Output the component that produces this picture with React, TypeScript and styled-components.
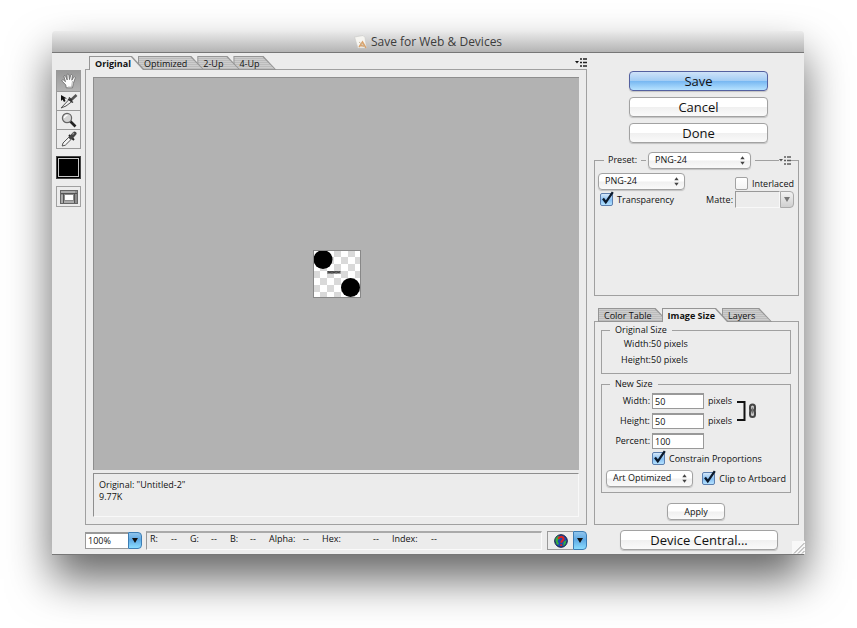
import React, { ReactNode, useState } from "react";
import styled, { createGlobalStyle } from "styled-components";

const GlobalStyle = createGlobalStyle`
  * { box-sizing: border-box; }
  body { margin: 0; background: #fff; }
  body, button, input, select {
    font-family: "Open Sans", "Noto Sans", sans-serif;
    font-size: 9px;
    line-height: 12px;
    color: #111;
  }
`;

const line = "#a0a0a0";

const Desktop = styled.div`
  display: flex;
  min-height: 100vh;
  padding: 31px 53px 73px 52px;
`;

const Window = styled.main`
  flex: 1;
  display: flex;
  flex-direction: column;
  min-width: 640px;
  background: #ececec;
  border-bottom: 1px solid #777;
  border-radius: 4px 4px 0 0;
  box-shadow: 0 24px 44px rgba(0, 0, 0, 0.6);
`;

const TitleBar = styled.header`
  display: flex;
  align-items: center;
  justify-content: center;
  gap: 4px;
  height: 22px;
  border-bottom: 1px solid #777;
  border-radius: 4px 4px 0 0;
  background: linear-gradient(#ebebeb, #b4b4b4);
`;

const Title = styled.h1`
  margin: 0;
  font-size: 12px;
  line-height: 20px;
  font-weight: 500;
  color: #3c3c3c;
`;

const Body = styled.div`
  flex: 1;
  display: grid;
  grid-template-columns: 25px minmax(0, 1fr) 211px;
  padding: 3px 6px 4px 4px;
`;

/* tools */

const Tools = styled.nav`
  display: flex;
  flex-direction: column;
  gap: 7px;
  padding-top: 14px;
`;

const ToolGroup = styled.div`
  display: flex;
  flex-direction: column;
  border: 1px solid #999;
`;

const ToolButton = styled.button<{ $active?: boolean }>`
  display: flex;
  align-items: center;
  justify-content: center;
  height: 20px;
  padding: 0;
  border: 0;
  background: ${(p) => (p.$active ? "linear-gradient(#989898, #b4b4b4)" : "#ececec")};
  & + & {
    height: 19px;
    border-top: 1px solid #999;
  }
`;

const Swatch = styled.button`
  height: 23px;
  padding: 0;
  border: 1px solid #444;
  outline: 1px solid #c8c8c8;
  outline-offset: -3px;
  background: #000;
`;

const PreviewToggle = styled.button`
  display: flex;
  align-items: center;
  justify-content: center;
  height: 21px;
  padding: 0;
  border: 1px solid #a0a0a0;
  background: #ececec;
`;

/* tabs */

const TabBar = styled.div`
  display: flex;
  align-items: flex-end;
  height: 13px;
  padding: 0 4px;
`;

const Tab = styled.button<{ $active: boolean; $order: number }>`
  position: relative;
  z-index: ${(p) => (p.$active ? 10 : p.$order)};
  height: 14px;
  margin: 0 -7px -1px 0;
  padding: 0 ${(p) => (p.$active ? "14px" : "17px")} 0 6px;
  border: 0;
  background: none;
  line-height: 13px;
  white-space: nowrap;
  font-weight: ${(p) => (p.$active ? 700 : 400)};
  &::before,
  &::after {
    content: "";
    position: absolute;
    z-index: -1;
  }
  &::before {
    inset: 0;
    background: #959595;
    clip-path: polygon(0 0, calc(100% - 13px) 0, 100% 100%, 0 100%);
  }
  &::after {
    inset: 1px 2px ${(p) => (p.$active ? "0" : "1px")} 1px;
    background: ${(p) =>
      p.$active ? "#ececec" : "repeating-linear-gradient(#cdcdcd 0 1px, #bcbcbc 1px 2px)"};
    clip-path: polygon(0 0, calc(100% - 12px) 0, 100% 100%, 0 100%);
  }
`;

const TabMenu = styled.button`
  display: flex;
  margin-left: auto;
  padding: 0 0 2px;
  border: 0;
  background: none;
`;

/* preview column */

const Preview = styled.section`
  display: flex;
  flex-direction: column;
  min-width: 0;
  margin-left: 4px;
`;

const PreviewTabs = styled(TabBar)`
  padding: 0 0 0 4px;
`;

const PreviewFrame = styled.div`
  flex: 1;
  display: flex;
  flex-direction: column;
  gap: 3px;
  padding: 7px;
  border: 1px solid ${line};
`;

const Canvas = styled.div`
  flex: 1;
  display: flex;
  align-items: center;
  justify-content: center;
  border: 1px solid #8e8e8e;
  border-width: 1px 0 0 1px;
  background: #b2b2b2;
`;

const Info = styled.div`
  height: 44px;
  padding: 5px;
  border: 1px solid;
  border-color: #8e8e8e #f8f8f8 #f8f8f8 #8e8e8e;
  p { margin: 0; }
`;

const Footer = styled.footer`
  display: flex;
  align-items: flex-end;
  height: 25px;
  gap: 4px;
`;

const Combo = styled.div<{ $wide?: boolean }>`
  display: flex;
  height: 17px;
  width: ${(p) => (p.$wide ? "59px" : "57px")};
`;

const ZoomCombo = styled(Combo)`
  height: 18px;
  padding-bottom: 1px;
`;

const ComboInput = styled.input`
  flex: 1;
  min-width: 0;
  padding: 0 2px;
  border: 1px solid #999;
  border-top-width: 2px;
  border-right: 0;
  background: #fff;
`;

const ComboArrow = styled.button<{ $muted?: boolean }>`
  display: flex;
  align-items: center;
  justify-content: center;
  width: 14px;
  padding: 0;
  border: 1px solid ${(p) => (p.$muted ? "#aaa" : "#3c7db4")};
  border-radius: 0 4px 4px 0;
  background: ${(p) =>
    p.$muted
      ? "linear-gradient(#f2f2f2, #cfcfcf)"
      : "linear-gradient(#8fc4ec, #5fa9e4 45%, #8adcff)"};
`;

const MatteWell = styled.span`
  flex: 1;
  border: 1px solid;
  border-color: #999 #f8f8f8 #f8f8f8 #999;
`;

const Readout = styled.dl`
  flex: 1;
  display: flex;
  height: 19px;
  margin: 0 1px 0 0;
  padding: 0 3px;
  border: 1px solid;
  border-color: #aaa #fafafa #fafafa #999;
  border-top-width: 2px;
`;

const ReadoutItem = styled.div<{ $label: number }>`
  display: grid;
  grid-template-columns: ${(p) => p.$label}px 19px;
  white-space: nowrap;
  dt, dd { margin: 0; line-height: 12px; }
`;

const BrowserPick = styled.div`
  display: flex;
  width: 40px;
  height: 19px;
`;

const BrowserButton = styled.button`
  flex: 1;
  display: flex;
  align-items: center;
  justify-content: center;
  padding: 0;
  border: 1px solid #999;
  border-right: 0;
  background: #ececec;
`;

/* settings column */

const Settings = styled.aside`
  display: flex;
  flex-direction: column;
  margin-left: 7px;
  margin-right: -1px;
`;

const Actions = styled.div`
  display: flex;
  flex-direction: column;
  gap: 6px;
  padding: 15px 31px 8px 35px;
`;

const PushButton = styled.button<{ $primary?: boolean }>`
  height: 20px;
  padding: 0;
  border: 1px solid ${(p) => (p.$primary ? "#5461a0" : "#a2a2a2")};
  border-radius: 4px;
  background: ${(p) =>
    p.$primary
      ? "linear-gradient(#cfe3f8, #a3cdf5 48%, #78b8f2 52%, #b6e2ff)"
      : "linear-gradient(#fff, #fff 48%, #f0f0f0 52%, #fafafa)"};
  box-shadow: 0 1px 1px rgba(0, 0, 0, 0.18);
  font-size: 13px;
  line-height: 17px;
`;

const SmallPush = styled(PushButton)`
  align-self: center;
  width: 58px;
  height: 17px;
  margin-top: 6px;
  font-size: 9px;
  line-height: 14px;
`;

const PresetGroup = styled.fieldset`
  height: 145px;
  min-width: 0;
  margin: 0;
  padding: 3px 4px 3px 3px;
  border: 1px solid ${line};
`;

const PresetLegend = styled.legend`
  display: flex;
  align-items: center;
  width: calc(100% + 7px);
  height: 18px;
  margin: 0 -4px 0 -3px;
  padding: 0;
`;

const Rule = styled.span<{ $width?: number }>`
  flex: ${(p) => (p.$width ? "none" : "1")};
  width: ${(p) => p.$width ?? 0}px;
  height: 1px;
  background: ${line};
  &:last-of-type { margin: 0; }
`;

const PresetLabel = styled.label`
  padding: 0 4px;
`;

const PresetSelect = styled.span`
  padding: 0 4px 0 2px;
`;

const LegendMenu = styled(TabMenu)`
  margin: 0;
  padding: 0;
  opacity: 0.7;
`;

const Row = styled.div`
  display: flex;
  align-items: center;
  justify-content: space-between;
  height: 17px;
`;

const FormatRow = styled(Row)`
  align-items: flex-end;
  height: 18px;
`;

const TransparencyRow = styled(Row)`
  height: 19px;
  padding-left: 2px;
`;

const SelectWrap = styled.span<{ $width: number }>`
  position: relative;
  display: flex;
  width: ${(p) => p.$width}px;
  height: 17px;
  svg {
    position: absolute;
    right: 6px;
    top: 4px;
    pointer-events: none;
  }
`;

const NativeSelect = styled.select`
  appearance: none;
  flex: 1;
  min-width: 0;
  padding: 0 18px 1px 6px;
  border: 1px solid #a2a2a2;
  border-radius: 4px;
  background: linear-gradient(#fff, #fff 48%, #f0f0f0 52%, #fafafa);
  box-shadow: 0 1px 1px rgba(0, 0, 0, 0.18);
`;

const CheckLabel = styled.label`
  display: flex;
  align-items: center;
  gap: 4px;
  white-space: nowrap;
`;

const CheckCell = styled.span`
  display: grid;
  width: 13px;
  height: 13px;
  & > * { grid-area: 1 / 1; }
  svg { overflow: visible; pointer-events: none; }
`;

const CheckInput = styled.input`
  appearance: none;
  width: 13px;
  height: 13px;
  margin: 0;
  border: 1px solid #a2a2a2;
  border-radius: 2px;
  background: linear-gradient(#fff, #f4f4f4);
  &:checked {
    border-color: #5d7fae;
    background: linear-gradient(#d5e8fa, #86bff3 55%, #b4e2ff);
  }
`;

const MatteField = styled.div`
  display: flex;
  align-items: center;
  gap: 2px;
`;

const SizeTabs = styled(TabBar)`
  margin-top: 12px;
`;

const SizePanel = styled.div`
  flex: 1;
  display: flex;
  flex-direction: column;
  gap: 4px;
  padding: 2px 7px 4px 6px;
  border: 1px solid ${line};
`;

const Group = styled.fieldset`
  min-width: 0;
  margin: 0;
  padding: 0 4px;
  border: 1px solid ${line};
  legend {
    margin-left: 4px;
    padding: 0 5px;
    line-height: 12px;
  }
`;

const OriginalSize = styled.dl`
  display: grid;
  grid-template-columns: 45px 1fr;
  align-content: start;
  row-gap: 4px;
  height: 37px;
  margin: 0;
  padding-top: 2px;
  dt { text-align: right; }
  dt, dd { margin: 0; line-height: 12px; }
`;

const SizeFields = styled.div`
  display: flex;
  align-items: flex-start;
  gap: 4px;
  padding-top: 3px;
  & > svg { margin-top: 7px; }
`;

const FieldGrid = styled.div`
  display: grid;
  grid-template-columns: 44px 52px auto;
  grid-auto-rows: 16px;
  align-items: center;
  column-gap: 2px;
  row-gap: 4px;
  label { text-align: right; }
`;

const NumberInput = styled.input`
  width: 100%;
  height: 16px;
  padding: 0 2px;
  border: 1px solid #999;
  border-top-width: 2px;
  background: #fff;
`;

const Unit = styled.span`
  padding-left: 2px;
`;

const ConstrainRow = styled(Row)`
  justify-content: flex-start;
  padding-left: 46px;
  height: 19px;
`;

const ClipRow = styled(Row)`
  height: 21px;
  margin-bottom: 3px;
`;

const BottomRow = styled.div`
  display: flex;
  align-items: flex-end;
  height: 25px;
  padding: 0 21px 0 26px;
  position: relative;
  & > button { flex: 1; }
  & > svg {
    position: absolute;
    right: -6px;
    bottom: -4px;
  }
`;

/* icons */

const MenuIcon = () => (
  <svg width="12" height="9" viewBox="0 0 12 9" aria-hidden="true">
    <path d="M0 3h4L2 5.500z" fill="#111" />
    <path d="M5 1h2M5 4.500h2M5 8h2M8 1h4M8 4.500h4M8 8h4" stroke="#222" strokeWidth="1.300" />
  </svg>
);

const UpDown = () => (
  <svg width="5" height="9" viewBox="0 0 5 9" aria-hidden="true">
    <path d="M.3 3.300L2.500 .3 4.700 3.300zM.3 5.700L2.500 8.700 4.700 5.700z" fill="#444" />
  </svg>
);

const Down = ({ color = "#111" }: { color?: string }) => (
  <svg width="6" height="5" viewBox="0 0 6 5" aria-hidden="true">
    <path d="M0 0h6L3 5z" fill={color} />
  </svg>
);

const Tick = () => (
  <svg width="13" height="13" viewBox="0 0 13 13" aria-hidden="true">
    <path d="M3 5.500L5.800 9.300L12.800 -0.800" fill="none" stroke="#0c1a2c" strokeWidth="2.300" />
  </svg>
);

const DocIcon = () => (
  <svg width="13" height="14" viewBox="0 0 13 14" aria-hidden="true">
    <path d="M.5 2L9 .5l2 2L12.500 13 4 13z" fill="#f6f5f1" stroke="#c9c9c7" strokeWidth=".6" />
    <path d="M5 12l3.500-5 3.500 6M6 10.500l5 .8" fill="none" stroke="#d9a26c" strokeWidth="1.500" />
    <path d="M5 7l6 5" stroke="#c9b79a" strokeWidth="1" />
  </svg>
);

const HandIcon = () => (
  <svg width="16" height="16" viewBox="0 0 16 16" aria-hidden="true">
    <path
      d="M5.200 14.800L4.800 12 1.200 8.200C.4 7.100 1.700 6.300 2.600 7.100L4.500 8.700 3 3.800C2.700 2.500 4.100 2.200 4.600 3.300L6.200 7 6 2C6 .7 7.700.7 7.900 2L8.500 6.600 9.700 2.200C10.100 1 11.600 1.400 11.400 2.700L10.800 7.200 12.700 4.300C13.400 3.300 14.700 4 14.200 5.200L12.300 10.500 11.500 14.800z"
      fill="#fff"
      stroke="#666"
      strokeWidth=".8"
    />
    <path d="M11.500 8l-1 6H7" fill="none" stroke="#bbb" />
  </svg>
);

const SliceIcon = () => (
  <svg width="18" height="15" viewBox="0 0 18 15" aria-hidden="true">
    <path d="M1 14L9 5.500 12 7.500 6 12z" fill="#eee" stroke="#555" strokeWidth="1" />
    <path d="M10 7L16.500 1" stroke="#555" strokeWidth="2.600" />
    <path d="M8 5l5 3.500M9 3.500l3 3" stroke="#333" strokeWidth="1.400" />
    <path d="M1 1v6l1.500-1.500 1.500 2.500 1.500-1L4.500 4.500h2.500z" fill="#111" />
  </svg>
);

const ZoomIcon = () => (
  <svg width="16" height="16" viewBox="0 0 16 16" aria-hidden="true">
    <path d="M9 9l5.500 5.500" stroke="#222" strokeWidth="2.600" />
    <circle cx="6" cy="6" r="4.600" fill="#d4d4d4" stroke="#666" strokeWidth="1.200" />
    <path d="M3.500 6a2.700 2.700 0 0 1 3-2.600" fill="none" stroke="#fff" strokeWidth="1.300" />
  </svg>
);

const DropperIcon = () => (
  <svg width="16" height="16" viewBox="0 0 16 16" aria-hidden="true">
    <path d="M1.200 15l.8-3 6.300-6.200 2.200 2.200-6.200 6.200z" fill="#f5f5f5" stroke="#555" />
    <path d="M8 4l5 5" stroke="#222" strokeWidth="2" />
    <path d="M10 6.500l3.500-4" stroke="#444" strokeWidth="4" strokeLinecap="round" />
    <path d="M11.500 3.500L13 2" stroke="#999" strokeWidth="1.200" />
  </svg>
);

const SlicesIcon = () => (
  <svg width="18" height="14" viewBox="0 0 18 14" aria-hidden="true">
    <rect x=".5" y=".5" width="17" height="13" fill="#8c8c8c" stroke="#666" />
    <path d="M1 1h14v2H1zM1 5h2v8H1z" fill="#aaa" />
    <path d="M1 3.500h16M3.500 4v9M14.500 4v9" stroke="#555" />
    <rect x="5" y="5" width="8" height="5" fill="#fff" />
    <path d="M4 11h10v2H4z" fill="#aaa" />
  </svg>
);

const GlobeIcon = () => (
  <svg width="14" height="14" viewBox="0 0 14 14" aria-hidden="true">
    <circle cx="7" cy="7" r="6.300" fill="#1d47b0" stroke="#101c38" />
    <path d="M1.500 4.500L4 1.800l2 1.700L3.500 7l1.500 3-2 1-1.500-4zM9.500 8l3-2-1 4-2 2.500z" fill="#37b03a" />
    <path
      d="M4.600 5C4.600 2.200 9.600 2.200 9.600 4.800 9.600 6.600 7.200 6.600 7.200 8.800M7.200 10.300v1.800"
      fill="none"
      stroke="#e2231c"
      strokeWidth="2"
    />
  </svg>
);

const LinkIcon = () => (
  <svg width="22" height="22" viewBox="0 0 22 22" aria-hidden="true">
    <path d="M1 2h7.500v18H1" fill="none" stroke="#111" strokeWidth="2" />
    <rect x="14" y="4.500" width="5" height="7" rx="2.500" fill="#ccc" stroke="#444" strokeWidth="2" />
    <rect x="14" y="10" width="5" height="7" rx="2.500" fill="#ccc" stroke="#444" strokeWidth="2" />
    <path d="M16.500 7.500v6" stroke="#777" strokeWidth="1.800" />
  </svg>
);

const Grip = () => (
  <svg width="13" height="13" viewBox="0 0 13 13" aria-hidden="true">
    <rect width="13" height="13" fill="#f8f8f8" />
    <path d="M2 12.500L12.500 2M6 12.500L12.500 6M10 12.500L12.500 10" stroke="#999" />
  </svg>
);

const CELL = 7;
const checker = Array.from({ length: 49 }, (_, i) => [i % 7, Math.floor(i / 7)]).filter(
  ([c, r]) => (c + r) % 2 === 1
);

const Artwork = () => (
  <svg width="48" height="48" viewBox="0 0 48 48" role="img" aria-label="Artwork preview">
    <rect width="48" height="48" fill="#fff" />
    {checker.map(([c, r]) => (
      <rect key={`${c}-${r}`} x={c * CELL} y={r * CELL} width={CELL} height={CELL} fill="#d9d9d9" />
    ))}
    <circle cx="10" cy="9.500" r="9.500" />
    <circle cx="37.500" cy="37.500" r="9.500" />
    <path
      d="M14.500 21l1.300 2.500 1.300-2.500 1.300 2.500 1.300-2.500 1.300 2.500 1.300-2.500 1.300 2.500 1.300-2.500 1.300 2.500 1.300-2.500M14.500 23.500l1.300-2.500 1.300 2.500 1.300-2.500 1.300 2.500 1.300-2.500 1.300 2.500 1.300-2.500 1.300 2.500 1.300-2.500 1.300 2.500"
      fill="none"
      stroke="#333"
      strokeWidth=".8"
    />
    <rect x=".5" y=".5" width="47" height="47" fill="none" stroke="#888" />
  </svg>
);

/* composed controls */

function Select({ id, label, width, value }: { id?: string; label?: string; width: number; value: string }) {
  return (
    <SelectWrap $width={width}>
      <NativeSelect id={id} aria-label={label} defaultValue={value}>
        <option>{value}</option>
      </NativeSelect>
      <UpDown />
    </SelectWrap>
  );
}

function Checkbox({ checked = false, children }: { checked?: boolean; children: ReactNode }) {
  const [on, setOn] = useState(checked);
  return (
    <CheckLabel>
      <CheckCell>
        <CheckInput type="checkbox" checked={on} onChange={(e) => setOn(e.target.checked)} />
        {on && <Tick />}
      </CheckCell>
      {children}
    </CheckLabel>
  );
}

function Tabs({ names, initial }: { names: string[]; initial: string }) {
  const [current, setCurrent] = useState(initial);
  return (
    <>
      {names.map((name, i) => (
        <Tab
          key={name}
          role="tab"
          aria-selected={name === current}
          $active={name === current}
          $order={names.length - i}
          onClick={() => setCurrent(name)}
        >
          {name}
        </Tab>
      ))}
    </>
  );
}

const readings: [string, number][] = [
  ["R:", 21],
  ["G:", 21],
  ["B:", 20],
  ["Alpha:", 34],
  ["Hex:", 51],
  ["Index:", 39],
];

const fields: [string, string, string, string][] = [
  ["width", "Width:", "50", "pixels"],
  ["height", "Height:", "50", "pixels"],
  ["percent", "Percent:", "100", ""],
];

export default function App() {
  return (
    <Desktop>
      <GlobalStyle />
      <Window>
        <TitleBar>
          <DocIcon />
          <Title>Save for Web &amp; Devices</Title>
        </TitleBar>
        <Body>
          <Tools aria-label="Tools">
            <ToolGroup>
              <ToolButton $active aria-label="Hand"><HandIcon /></ToolButton>
              <ToolButton aria-label="Slice select"><SliceIcon /></ToolButton>
              <ToolButton aria-label="Zoom"><ZoomIcon /></ToolButton>
              <ToolButton aria-label="Eyedropper"><DropperIcon /></ToolButton>
            </ToolGroup>
            <Swatch aria-label="Eyedropper color" />
            <PreviewToggle aria-label="Toggle slices visibility"><SlicesIcon /></PreviewToggle>
          </Tools>

          <Preview>
            <PreviewTabs role="tablist">
              <Tabs names={["Original", "Optimized", "2-Up", "4-Up"]} initial="Original" />
              <TabMenu aria-label="Preview menu"><MenuIcon /></TabMenu>
            </PreviewTabs>
            <PreviewFrame>
              <Canvas><Artwork /></Canvas>
              <Info>
                <p>Original: "Untitled-2"</p>
                <p>9.77K</p>
              </Info>
            </PreviewFrame>
            <Footer>
              <ZoomCombo>
                <ComboInput aria-label="Zoom level" defaultValue="100%" />
                <ComboArrow aria-label="Zoom levels"><Down /></ComboArrow>
              </ZoomCombo>
              <Readout>
                {readings.map(([name, width]) => (
                  <ReadoutItem key={name} $label={width}>
                    <dt>{name}</dt>
                    <dd>--</dd>
                  </ReadoutItem>
                ))}
              </Readout>
              <BrowserPick>
                <BrowserButton aria-label="Preview in browser"><GlobeIcon /></BrowserButton>
                <ComboArrow aria-label="Choose browser"><Down /></ComboArrow>
              </BrowserPick>
            </Footer>
          </Preview>

          <Settings>
            <Actions>
              <PushButton $primary>Save</PushButton>
              <PushButton>Cancel</PushButton>
              <PushButton>Done</PushButton>
            </Actions>

            <PresetGroup>
              <PresetLegend>
                <Rule $width={9} />
                <PresetLabel htmlFor="preset">Preset:</PresetLabel>
                <Rule $width={5} />
                <PresetSelect>
                  <Select id="preset" width={103} value="PNG-24" />
                </PresetSelect>
                <Rule />
                <LegendMenu aria-label="Preset menu"><MenuIcon /></LegendMenu>
                <Rule $width={7} />
              </PresetLegend>
              <FormatRow>
                <Select label="File format" width={87} value="PNG-24" />
                <Checkbox>Interlaced</Checkbox>
              </FormatRow>
              <TransparencyRow>
                <Checkbox checked>Transparency</Checkbox>
                <MatteField>
                  <label htmlFor="matte">Matte:</label>
                  <Combo $wide>
                    <MatteWell />
                    <ComboArrow id="matte" $muted disabled><Down color="#777" /></ComboArrow>
                  </Combo>
                </MatteField>
              </TransparencyRow>
            </PresetGroup>

            <SizeTabs role="tablist">
              <Tabs names={["Color Table", "Image Size", "Layers"]} initial="Image Size" />
            </SizeTabs>
            <SizePanel>
              <Group>
                <legend>Original Size</legend>
                <OriginalSize>
                  <dt>Width:</dt>
                  <dd>50 pixels</dd>
                  <dt>Height:</dt>
                  <dd>50 pixels</dd>
                </OriginalSize>
              </Group>
              <Group>
                <legend>New Size</legend>
                <SizeFields>
                  <FieldGrid>
                    {fields.map(([id, label, value, unit]) => (
                      <React.Fragment key={id}>
                        <label htmlFor={id}>{label}</label>
                        <NumberInput id={id} defaultValue={value} />
                        <Unit>{unit}</Unit>
                      </React.Fragment>
                    ))}
                  </FieldGrid>
                  <LinkIcon />
                </SizeFields>
                <ConstrainRow>
                  <Checkbox checked>Constrain Proportions</Checkbox>
                </ConstrainRow>
                <ClipRow>
                  <Select label="Optimization" width={87} value="Art Optimized" />
                  <Checkbox checked>Clip to Artboard</Checkbox>
                </ClipRow>
              </Group>
              <SmallPush>Apply</SmallPush>
            </SizePanel>
            <BottomRow>
              <PushButton>Device Central...</PushButton>
              <Grip />
            </BottomRow>
          </Settings>
        </Body>
      </Window>
    </Desktop>
  );
}
